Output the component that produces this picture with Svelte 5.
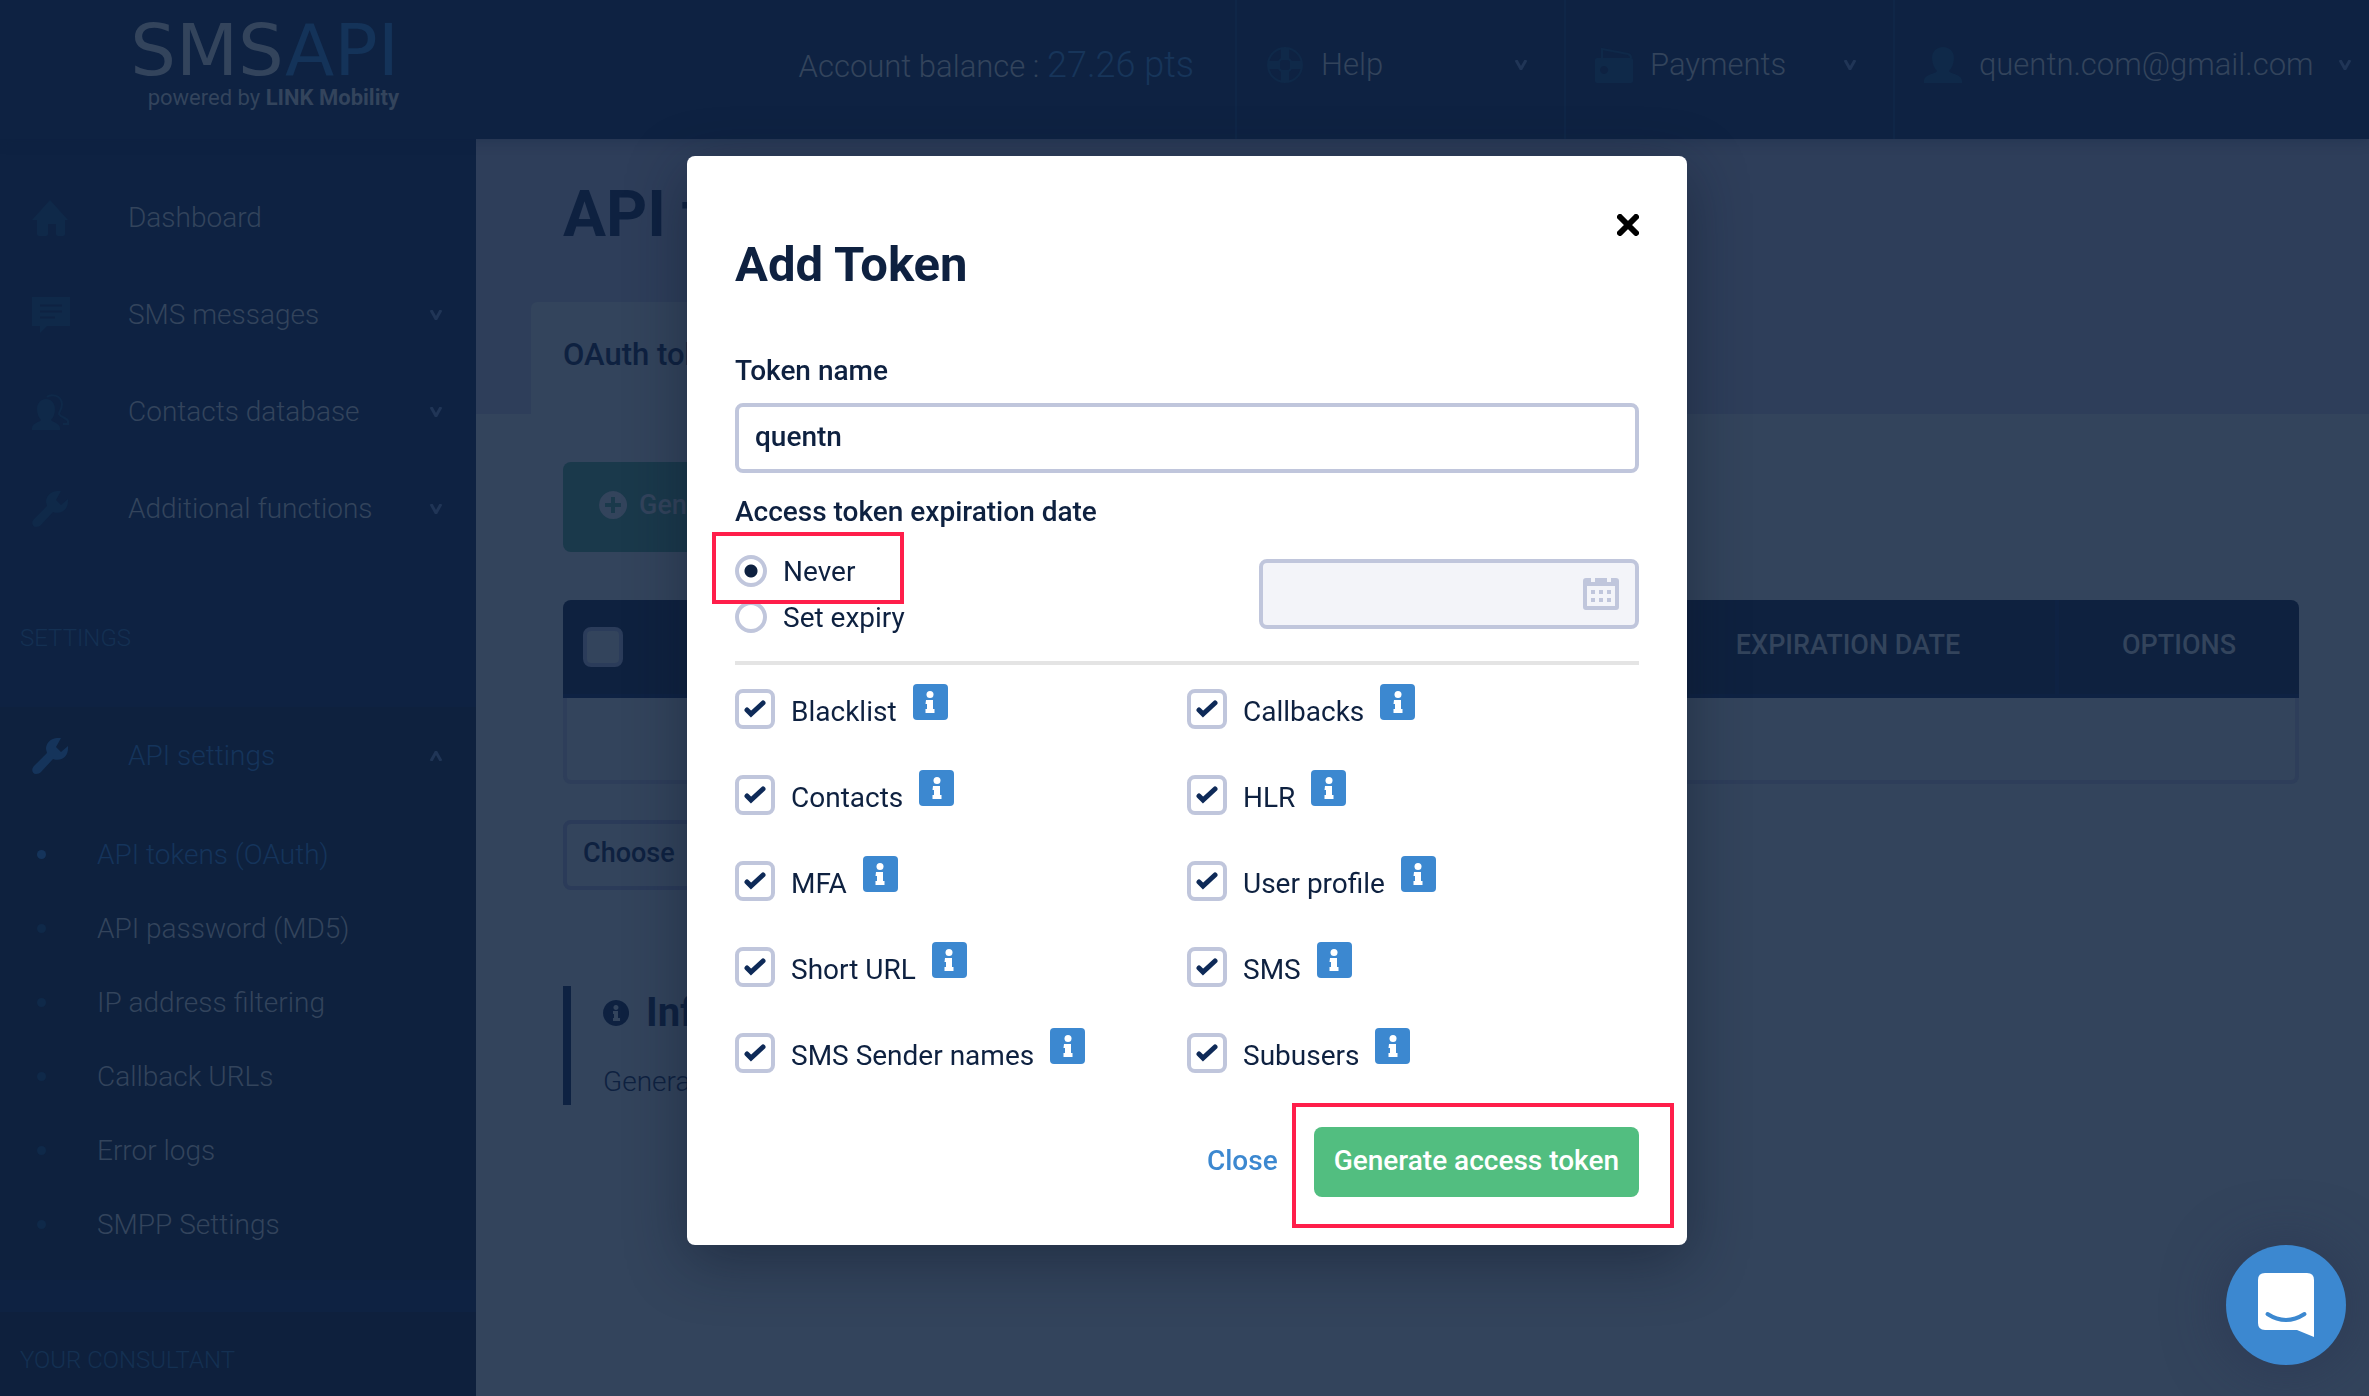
<script>
  let tokenName = $state("quentn");
  let expiry = $state("never");

  let scopes = $state([
    { id: "blacklist", label: "Blacklist", checked: true },
    { id: "callbacks", label: "Callbacks", checked: true },
    { id: "contacts", label: "Contacts", checked: true },
    { id: "hlr", label: "HLR", checked: true },
    { id: "mfa", label: "MFA", checked: true },
    { id: "profile", label: "User profile", checked: true },
    { id: "shorturl", label: "Short URL", checked: true },
    { id: "sms", label: "SMS", checked: true },
    { id: "sendernames", label: "SMS Sender names", checked: true },
    { id: "subusers", label: "Subusers", checked: true }
  ]);

  const menu = [
    { icon: "home", label: "Dashboard" },
    { icon: "message", label: "SMS messages", more: true },
    { icon: "contacts", label: "Contacts database", more: true },
    { icon: "wrench", label: "Additional functions", more: true }
  ];

  const submenu = [
    "API tokens (OAuth)",
    "API password (MD5)",
    "IP address filtering",
    "Callback URLs",
    "Error logs",
    "SMPP Settings"
  ];

  const topLinks = [
    { icon: "ring", label: "Help" },
    { icon: "wallet", label: "Payments" },
    { icon: "user", label: "quentn.com@gmail.com", wide: true }
  ];
</script>

{#snippet icon(name)}
  <svg class="icon" viewBox="0 0 38 36" aria-hidden="true">
    {#if name === "home"}
      <path d="M18 0 36 20h-3v14q0 2-2 2h-5q-2 0-2-2V24h-8v10q0 2-2 2H7q-2 0-2-2V20H0Z" />
    {:else if name === "message"}
      <path d="M0 0h38v29H15l-7 7V29H0Z" />
      <path class="cut" d="M8 8.500h22M8 14.500h22M8 20.500h15" />
    {:else if name === "contacts"}
      <path d="M14 5c-5 0-9 4-9 10 0 5 2 9 4 11-1 2-9 3-9 8v2h28v-2c0-5-8-6-9-8 2-2 4-6 4-11 0-6-4-10-9-10Z" />
      <path class="line" d="M15 3c3-3 14-3 15 7 0 6-3 7-3 10 1 3 8 4 9 7v3h-5" />
    {:else if name === "wrench"}
      <path d="M29 0c-9-1-15 4-15 11l1 4L2 28c-3 3-2 8 2 8 2 0 4-1 5-2l12-13c8 3 16-2 15-13l-7 6-5-5 5-9Z" />
    {:else if name === "ring"}
      <circle class="line" cx="19" cy="18" r="17" />
      <circle class="line" cx="19" cy="18" r="7" />
      <path fill-rule="evenodd" d="M15 1h8v12h-8ZM15 23h8v12h-8ZM2 14h12v8H2ZM24 14h12v8H24Z" />
    {:else if name === "wallet"}
      <path class="line" d="M7 11V2l26 5q3 1 3 4" />
      <path fill-rule="evenodd" d="M2 11h34q2 0 2 2v21q0 2-2 2H2q-2 0-2-2V13q0-2 2-2ZM9 19a4 4 0 1 0 .1 0Z" />
    {:else}
      <path d="M19 0c-7 0-11 5-11 11 0 5 2 10 5 13-1 3-13 3-13 10v2h38v-2c0-7-12-7-13-10 3-3 5-8 5-13 0-6-4-11-11-11Z" />
    {/if}
  </svg>
{/snippet}

{#snippet chevron(up)}
  <svg class="chevron" viewBox="0 0 14 10" aria-hidden="true">
    <path d={up ? "M2 10 7 1l5 9" : "M2 0l5 9 5-9"} />
  </svg>
{/snippet}

<div class="page">
  <header class="topbar">
    <div class="logo">
      <span class="logo-name">SMS<em>API</em></span>
      <span class="logo-sub">powered by <b>LINK Mobility</b></span>
    </div>
    <div class="balance">Account balance : <span>27.26 pts</span></div>
    {#each topLinks as link}
      <a class="top-link" class:wide={link.wide} href="#{link.icon}">
        {@render icon(link.icon)}
        <span>{link.label}</span>
        {@render chevron(false)}
      </a>
    {/each}
  </header>

  <div class="columns">
    <nav class="sidebar">
      <div class="menu">
        {#each menu as item}
          <a class="menu-item" href="#{item.icon}">
            {@render icon(item.icon)}
            <span>{item.label}</span>
            {#if item.more}{@render chevron(false)}{/if}
          </a>
        {/each}
      </div>
      <div class="group">SETTINGS</div>
      <div class="section">
        <a class="menu-item current" href="#api">
          {@render icon("wrench")}
          <span>API settings</span>
          {@render chevron(true)}
        </a>
        <ul class="submenu">
          {#each submenu as label, i}
            <li class:current={i === 0}><a href="#sub{i}">{label}</a></li>
          {/each}
        </ul>
      </div>
      <div class="consultant">YOUR CONSULTANT</div>
    </nav>

    <main class="content">
      <div class="heading">
        <h1>API tokens</h1>
        <div class="tabs"><a class="tab" href="#oauth">OAuth tokens</a></div>
      </div>
      <div class="body">
        <button class="generate" type="button">
          <svg viewBox="0 0 28 28" aria-hidden="true">
            <path fill-rule="evenodd" d="M14 0a14 14 0 1 0 .1 0ZM12 6h4v6h6v4h-6v6h-4v-6H6v-4h6Z" />
          </svg>
          Generate
        </button>
        <table>
          <thead>
            <tr>
              <th class="pick"><input type="checkbox" aria-label="Select all" /></th>
              <th></th>
              <th class="date">EXPIRATION DATE</th>
              <th class="options">OPTIONS</th>
            </tr>
          </thead>
          <tbody>
            <tr><td colspan="4"></td></tr>
          </tbody>
        </table>
        <select aria-label="Bulk action">
          <option>Choose</option>
        </select>
        <section class="info">
          <h2>
            <svg viewBox="0 0 26 26" aria-hidden="true">
              <path fill-rule="evenodd" d="M13 0a13 13 0 1 0 .1 0ZM13 5a2.500 2.500 0 1 1-.1 0ZM10 11h5v7h2v3h-7v-3h1v-4h-1Z" />
            </svg>
            Info
          </h2>
          <p>Generate</p>
        </section>
      </div>
    </main>
  </div>
</div>

<div class="overlay">
  <div class="modal" role="dialog" aria-modal="true" aria-labelledby="modal-title">
    <button class="dismiss" type="button" aria-label="Close dialog">
      <svg viewBox="0 0 22 22" aria-hidden="true"><path d="M3 3l16 16M19 3 3 19" /></svg>
    </button>
    <h2 id="modal-title">Add Token</h2>

    <label class="field-label" for="token-name">Token name</label>
    <input id="token-name" class="text" type="text" bind:value={tokenName} />

    <div class="field-label expiration">Access token expiration date</div>
    <div class="expiry">
      <div class="radios">
        <label class="marked">
          <input type="radio" name="expiry" value="never" bind:group={expiry} />
          Never
        </label>
        <label>
          <input type="radio" name="expiry" value="set" bind:group={expiry} />
          Set expiry
        </label>
      </div>
      <div class="date-field">
        <input type="text" aria-label="Expiry date" disabled={expiry === "never"} />
        <svg viewBox="0 0 36 32" aria-hidden="true">
          <path fill-rule="evenodd" d="M3 0h5v4h4V0h12v4h4V0h5q3 0 3 3v26q0 3-3 3H3q-3 0-3-3V3q0-3 3-3ZM4 8v20h28V8Z" />
          <path d="M8 12h4v4H8ZM16 12h4v4h-4ZM24 12h4v4h-4ZM8 20h4v4H8ZM16 20h4v4h-4ZM24 20h4v4h-4Z" />
        </svg>
      </div>
    </div>
    <hr />

    <div class="scopes">
      {#each scopes as scope (scope.id)}
        <div class="scope">
          <span class="box">
            <input id={scope.id} type="checkbox" bind:checked={scope.checked} />
            <svg viewBox="0 0 22 18" aria-hidden="true"><path d="M3 10l4 4L19 3" /></svg>
          </span>
          <label for={scope.id}>{scope.label}</label>
          <button class="hint" type="button" aria-label="About {scope.label}">
            <svg viewBox="0 0 10 22" aria-hidden="true">
              <circle cx="5" cy="3.500" r="3.500" />
              <path d="M1 9h7v9h1.500v4h-9v-4H2v-5H.5Z" />
            </svg>
          </button>
        </div>
      {/each}
    </div>

    <footer>
      <button class="close" type="button">Close</button>
      <span class="marked-wide">
        <button class="submit" type="button">Generate access token</button>
      </span>
    </footer>
  </div>
</div>

<button class="chat" type="button" aria-label="Open chat">
  <svg viewBox="0 0 56 64" aria-hidden="true">
    <path fill="#fff" d="M7 0h42q7 0 7 7v57l-17-7H7q-7 0-7-7V7q0-7 7-7Z" />
    <path class="smile" d="M9.500 41q18.500 12 37 0" />
  </svg>
</button>

<style>
  :global(body) {
    background: #33445c;
    font-family: Roboto, "Noto Sans", sans-serif;
    font-size: 28px;
    color: #0e2140;
    overflow: hidden;
  }

  a {
    color: inherit;
    text-decoration: none;
  }

  button,
  input,
  select {
    font: inherit;
    color: inherit;
    box-sizing: border-box;
    margin: 0;
  }

  button {
    border: 0;
    padding: 0;
    background: none;
    cursor: pointer;
  }

  .page {
    min-height: 100vh;
    display: flex;
    flex-direction: column;
  }

  /* top bar */
  .topbar {
    display: flex;
    height: 139px;
    background: #0e2242;
    color: #33445c;
    font-size: 31px;
    font-weight: 300;
    position: relative;
    box-shadow: 0 2px 12px rgba(14, 33, 64, 0.3);
  }

  .logo {
    width: 399px;
    display: flex;
    flex-direction: column;
    align-items: flex-end;
    padding-top: 15px;
    font-size: 22px;
    font-weight: 400;
  }

  .logo-name {
    font-family: "DejaVu Sans", sans-serif;
    font-size: 72px;
    line-height: 70px;
  }

  .logo-name em {
    font-style: normal;
    color: #143359;
  }

  .logo-sub {
    line-height: 26px;
  }

  .balance {
    flex: 1;
    text-align: right;
    line-height: 130px;
    padding-right: 41px;
    white-space: nowrap;
  }

  .balance span {
    font-size: 36px;
    color: #17355a;
  }

  .top-link {
    width: 329px;
    box-sizing: border-box;
    border-left: 2px solid #0f2647;
    padding: 0 36px 10px 29px;
    display: flex;
    align-items: center;
    gap: 17px;
  }

  .top-link.wide {
    width: 476px;
    padding-right: 17px;
  }

  .top-link span {
    flex: 1;
  }

  .icon {
    width: 38px;
    height: 36px;
    flex: none;
    fill: #0f2949;
  }

  .icon .line {
    fill: none;
    stroke: #0f2949;
    stroke-width: 2;
  }

  .icon .cut {
    fill: none;
    stroke: #0e2242;
    stroke-width: 2;
  }

  .chevron {
    width: 14px;
    height: 10px;
    flex: none;
    fill: none;
    stroke: #203556;
    stroke-width: 3;
  }

  /* side menu */
  .columns {
    flex: 1;
    display: flex;
  }

  .sidebar {
    width: 476px;
    flex: none;
    background: #0e2242;
    color: #33445c;
    font-weight: 300;
    display: flex;
    flex-direction: column;
  }

  .menu {
    padding-top: 30px;
  }

  .menu-item {
    display: flex;
    align-items: center;
    height: 97px;
    padding: 0 33px 0 32px;
  }

  .menu-item span {
    flex: 1;
    padding-left: 58px;
  }

  .current,
  .current .icon {
    color: #15345b;
    fill: #15345b;
  }

  .group {
    padding: 0 20px;
    line-height: 162px;
    height: 150px;
    font-size: 24px;
    color: #143052;
  }

  .section {
    background: #0e213e;
  }

  .submenu {
    list-style: none;
    margin: 0;
    padding: 13px 0 19px 37px;
  }

  .submenu li {
    display: flex;
    align-items: center;
    height: 74px;
  }

  .submenu li::before {
    content: "";
    width: 9px;
    height: 9px;
    margin-right: 51px;
    border-radius: 50%;
    background: #0f2949;
  }

  .submenu .current::before {
    background: #15345b;
  }

  .consultant {
    flex: 1;
    margin-top: 32px;
    padding: 30px 20px 0;
    background: #0e203d;
    color: #143052;
    font-size: 24px;
    line-height: 36px;
  }

  /* page behind the dialog */
  .content {
    flex: 1;
    background: #33445c;
  }

  .heading {
    background: #2e3e5a;
    height: 275px;
    display: flex;
    flex-direction: column;
    justify-content: space-between;
  }

  h1 {
    margin: 36px 87px 0;
    font-size: 64px;
    line-height: 80px;
  }

  .tabs {
    display: flex;
    padding-left: 55px;
  }

  .tab {
    padding: 0 32px 6px;
    line-height: 106px;
    border-radius: 6px 6px 0 0;
    background: #33445c;
    font-size: 31px;
    font-weight: 500;
  }

  .body {
    display: flex;
    flex-direction: column;
    align-items: flex-start;
    padding: 48px 70px 0 87px;
  }

  .generate {
    display: flex;
    align-items: center;
    gap: 12px;
    height: 90px;
    padding: 0 36px 4px;
    border-radius: 8px;
    background: #1a394b;
    color: #33445c;
    font-size: 27px;
    font-weight: 500;
  }

  .generate svg {
    width: 28px;
    fill: #33445c;
  }

  table {
    width: 100%;
    margin: 48px 0 36px;
    border-collapse: separate;
    border-spacing: 0;
  }

  th {
    height: 98px;
    box-sizing: border-box;
    padding: 0 0 4px;
    background: #0e213f;
    color: #33445c;
    font-size: 27px;
    font-weight: 500;
    border-bottom: 4px solid #0e2243;
  }

  .pick {
    width: 80px;
    padding: 0 0 0 20px;
    text-align: left;
    border-top-left-radius: 8px;
  }

  .pick input {
    appearance: none;
    display: block;
    width: 40px;
    height: 40px;
    border: 4px solid #2b3c5a;
    border-radius: 8px;
    background: #33445c;
  }

  .date {
    width: 418px;
    border-right: 4px solid #0e2243;
  }

  .options {
    width: 240px;
    border-top-right-radius: 8px;
  }

  td {
    height: 82px;
    padding: 0;
    border: 4px solid #2e3e5a;
    border-top: 0;
    border-radius: 0 0 8px 8px;
  }

  select {
    appearance: none;
    width: 400px;
    height: 70px;
    padding: 0 16px 4px;
    border: 4px solid #2b3b59;
    border-radius: 8px;
    background: #33445c;
    font-size: 27px;
    font-weight: 500;
  }

  .info {
    margin-top: 96px;
    height: 119px;
    padding-left: 32px;
    border-left: 8px solid #0e2242;
    font-weight: 300;
  }

  .info h2 {
    display: flex;
    align-items: center;
    gap: 17px;
    margin: 0;
    font-size: 40px;
    line-height: 54px;
  }

  .info svg {
    width: 26px;
    fill: #0e2140;
  }

  .info p {
    margin: 24px 0 0;
    line-height: 36px;
  }

  /* dialog */
  .overlay {
    position: fixed;
    inset: 0;
    display: flex;
    justify-content: center;
    align-items: flex-start;
    padding: 156px 0 0 5px;
  }

  .modal {
    position: relative;
    width: 1000px;
    box-sizing: border-box;
    padding: 79px 48px 48px;
    border-radius: 8px;
    background: #fff;
    box-shadow: 0 16px 60px rgba(14, 22, 40, 0.45);
  }

  .dismiss {
    position: absolute;
    top: 58px;
    right: 48px;
    width: 22px;
    height: 22px;
  }

  .dismiss svg {
    display: block;
    fill: none;
    stroke: #000;
    stroke-width: 6;
    stroke-linecap: round;
  }

  .modal h2 {
    margin: 0 0 56px;
    font-size: 49px;
    line-height: 60px;
  }

  .field-label {
    display: block;
    font-weight: 500;
    line-height: 40px;
  }

  .text {
    display: block;
    width: 100%;
    height: 70px;
    margin: 12px 0 19px;
    padding: 0 16px 4px;
    border: 4px solid #c0c6dc;
    border-radius: 8px;
    font-weight: 500;
  }

  .expiration {
    margin-bottom: 16px;
  }

  .expiry {
    display: flex;
    justify-content: space-between;
    align-items: center;
  }

  .radios label {
    position: relative;
    display: flex;
    align-items: center;
    gap: 16px;
    height: 46px;
  }

  .radios input {
    appearance: none;
    width: 32px;
    height: 32px;
    border: 4px solid #c0c6dc;
    border-radius: 50%;
    background: #fff;
  }

  .radios input:checked {
    background: radial-gradient(circle, #0e2140 6px, #fff 7px);
  }

  /* highlighted controls */
  .marked::after,
  .marked-wide::after {
    content: "";
    position: absolute;
    z-index: 1;
    border: 4px solid #ff1e4a;
    pointer-events: none;
  }

  .marked::after {
    top: -16px;
    left: -23px;
    width: 184px;
    height: 64px;
  }

  .marked-wide {
    position: relative;
  }

  .marked-wide::after {
    inset: -24px -35px -31px -22px;
  }

  .date-field {
    position: relative;
    width: 380px;
  }

  .date-field input {
    display: block;
    width: 100%;
    height: 70px;
    padding: 0 60px 0 16px;
    border: 4px solid #c0c6dc;
    border-radius: 8px;
    background: #f3f4f9;
  }

  .date-field svg {
    position: absolute;
    top: 19px;
    right: 20px;
    width: 36px;
    fill: #c0c6dc;
  }

  hr {
    height: 4px;
    margin: 21px 0 1px;
    border: 0;
    background: #e4e4e4;
  }

  .scopes {
    display: grid;
    grid-template-columns: 1fr 1fr;
  }

  .scope {
    display: flex;
    align-items: center;
    height: 86px;
  }

  .box {
    display: grid;
    place-items: center;
  }

  .box > * {
    grid-area: 1 / 1;
  }

  .box input {
    appearance: none;
    width: 40px;
    height: 40px;
    border: 4px solid #c0c6dc;
    border-radius: 8px;
  }

  .box svg {
    width: 22px;
    display: none;
    fill: none;
    stroke: #0e2a58;
    stroke-width: 5;
    stroke-linecap: round;
    pointer-events: none;
  }

  .box input:checked + svg {
    display: block;
  }

  .scope label {
    padding: 4px 16px 0;
  }

  .hint {
    display: grid;
    place-items: center;
    width: 35px;
    height: 36px;
    margin-bottom: 14px;
    border-radius: 4px;
    background: #3c88d0;
  }

  .hint svg {
    width: 10px;
    fill: #fff;
  }

  footer {
    display: flex;
    justify-content: flex-end;
    align-items: center;
    gap: 36px;
    margin-top: 31px;
    font-weight: 500;
  }

  .close {
    color: #3c88d0;
    padding-bottom: 4px;
  }

  .submit {
    display: block;
    height: 70px;
    padding: 0 20px 4px;
    border-radius: 8px;
    background: #52be80;
    color: #fff;
  }

  .chat {
    position: fixed;
    right: 23px;
    bottom: 31px;
    width: 120px;
    height: 120px;
    display: grid;
    place-items: center;
    border-radius: 50%;
    background: #3c88d0;
    box-shadow: 0 2px 60px rgba(40, 50, 80, 0.6);
  }

  .chat svg {
    width: 56px;
  }

  .smile {
    fill: none;
    stroke: #3c88d0;
    stroke-width: 4;
    stroke-linecap: round;
  }
</style>
